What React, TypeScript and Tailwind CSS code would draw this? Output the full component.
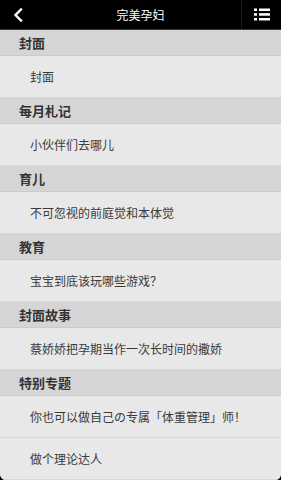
import React from 'react';

const sections = [
	{ title: '封面', items: ['封面'] },
	{ title: '每月札记', items: ['小伙伴们去哪儿'] },
	{ title: '育儿', items: ['不可忽视的前庭觉和本体觉'] },
	{ title: '教育', items: ['宝宝到底该玩哪些游戏？'] },
	{ title: '封面故事', items: ['蔡娇娇把孕期当作一次长时间的撒娇'] },
	{ title: '特别专题', items: ['你也可以做自己の专属「体重管理」师！', '做个理论达人'] },
];

const App: React.FC = () => {
	return (
		<div
			className="w-[281px] h-[480px] bg-black overflow-hidden flex flex-col"
			style={{ fontFamily: '"Noto Sans CJK SC", "Noto Sans", sans-serif' }}
		>
			{/* top bar */}
			<div className="h-[30px] flex items-center bg-black border-b border-[#3a3a3a] shrink-0">
				<div className="w-[40px] h-full flex items-center pl-[13px]">
					<svg width="11" height="14" viewBox="0 0 11 14">
						<path d="M8 1.5 L2.5 7 L8 12.5" stroke="#fff" strokeWidth="2.4" fill="none" strokeLinecap="square" />
					</svg>
				</div>
				<div className="flex-1 text-center text-white text-[12px] leading-none pr-[0px]">完美孕妇</div>
				<div className="w-[40px] h-full flex items-center justify-center border-l border-[#1e1e1e]">
					<svg width="16" height="13" viewBox="0 0 16 13">
						<rect x="0" y="0.5" width="3" height="2.5" fill="#fff" />
						<rect x="5" y="0.5" width="11" height="2.5" fill="#fff" />
						<rect x="0" y="5.2" width="3" height="2.5" fill="#fff" />
						<rect x="5" y="5.2" width="11" height="2.5" fill="#fff" />
						<rect x="0" y="10" width="3" height="2.5" fill="#fff" />
						<rect x="5" y="10" width="11" height="2.5" fill="#fff" />
					</svg>
				</div>
			</div>
			{/* list */}
			<div className="flex-1 bg-[#e8e8e8] rounded-b-[6px] overflow-hidden flex flex-col">
				{sections.map((sec) => (
					<div key={sec.title} className="flex flex-col">
						<div className="h-[26px] bg-[#d5d5d5] border-b border-[#cbcbcb] flex items-center pl-[19px] text-[13px] font-bold text-[#333]">
							{sec.title}
						</div>
						{sec.items.map((item) => (
							<div
								key={item}
								className="h-[42px] bg-[#e8e8e8] border-b border-[#d8d8d8] flex items-center pl-[30px] text-[12px] text-[#3a3a3a]"
							>
								{item}
							</div>
						))}
					</div>
				))}
			</div>
		</div>
	);
};

export default App;
